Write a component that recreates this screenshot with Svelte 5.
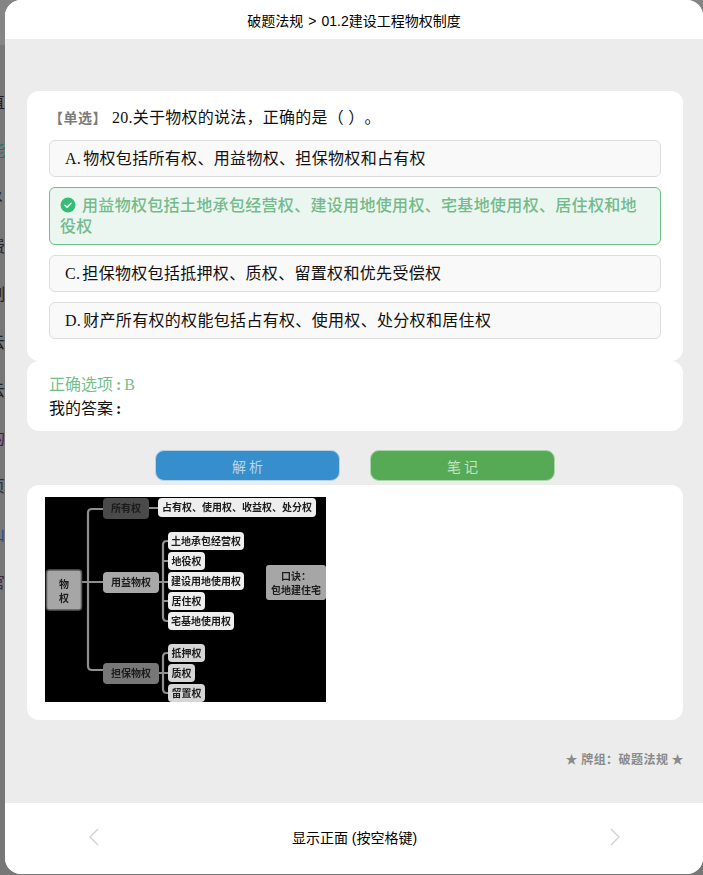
<script>
  const bgRows = [
    { t: '直', c: '#1d1d2b' }, { t: '能', c: '#0d7a74' }, { t: '㐅', c: '#222' }, { t: '费', c: '#1c2733' },
    { t: '制', c: '#222' }, { t: '云', c: '#222' }, { t: '云', c: '#222' }, { t: '的', c: '#3c1a5c' },
    { t: '页', c: '#2b3340' }, { t: '山', c: '#1c4f8a' }, { t: '官', c: '#3b2a4c' }
  ];
  const options = [
    { key: 'A.', text: '物权包括所有权、用益物权、担保物权和占有权' },
    { key: 'B.', text: '用益物权包括土地承包经营权、建设用地使用权、宅基地使用权、居住权和地役权', correct: true },
    { key: 'C.', text: '担保物权包括抵押权、质权、留置权和优先受偿权' },
    { key: 'D.', text: '财产所有权的权能包括占有权、使用权、处分权和居住权' }
  ];
  const nodes = [
    { x: 58, y: 1, w: 46, h: 21, t: '所有权', k: 'dark' },
    { x: 113, y: 1, w: 158, h: 19, t: '占有权、使用权、收益权、处分权', k: 'light' },
    { x: 58, y: 75, w: 56, h: 21, t: '用益物权', k: 'mid' },
    { x: 123, y: 35, w: 76, h: 18, t: '土地承包经营权', k: 'light' },
    { x: 123, y: 55, w: 37, h: 18, t: '地役权', k: 'light' },
    { x: 123, y: 75, w: 76, h: 18, t: '建设用地使用权', k: 'light' },
    { x: 123, y: 95, w: 37, h: 18, t: '居住权', k: 'light' },
    { x: 123, y: 115, w: 66, h: 18, t: '宅基地使用权', k: 'light' },
    { x: 58, y: 166, w: 56, h: 21, t: '担保物权', k: 'mid2' },
    { x: 123, y: 147, w: 37, h: 18, t: '抵押权', k: 'pale' },
    { x: 123, y: 167, w: 27, h: 18, t: '质权', k: 'pale' },
    { x: 123, y: 187, w: 37, h: 18, t: '留置权', k: 'pale' }
  ];
</script>

<div class="backdrop">
  <div class="bg-top"></div>
  <div class="bg-rows">
    {#each bgRows as r}<span style:color={r.c}>{r.t}</span>{/each}
  </div>
  <div class="modal">
    <header class="top">破题法规 &gt; 01.2建设工程物权制度</header>
    <main class="body">
      <section class="card question">
        <p class="stem"><span class="tag">【单选】</span>20.关于物权的说法，正确的是（ ）。</p>
        {#each options as o}
          <div class="option" class:correct={o.correct}>
            {#if o.correct}
              <svg class="check" viewBox="0 0 16 16" width="16" height="16">
                <circle cx="8" cy="8" r="7.5" fill="#35bd78" />
                <path d="M5 8.2l2.1 2 3.9-3.900" fill="none" stroke="#fff" stroke-width="1.500" stroke-linecap="round" stroke-linejoin="round" />
              </svg>
              {o.text}
            {:else}
              <span class="key">{o.key}</span>{o.text}
            {/if}
          </div>
        {/each}
      </section>
      <section class="card answer">
        <div class="right">正确选项 <b>:</b> B</div>
        <div>我的答案 <b>:</b></div>
      </section>
      <div class="buttons">
        <button class="blue">解 析</button>
        <button class="green">笔 记</button>
      </div>
      <section class="card picture">
        <svg class="diagram" viewBox="0 0 281 205" width="281" height="205">
          <rect width="281" height="205" fill="#000" />
          <g class="lines" fill="none" stroke="#8f8f8f" stroke-width="2.200">
            <path d="M36 85h7M43 85V16q0-4 4-4h11M43 85h15M43 85v84q0 4 4 4h11" />
            <path d="M104 11h9" />
            <path d="M114 85h9M118 85V48q0-4 4-4h1M118 64h5M118 104h5M118 85v35q0 4 4 4h1" />
            <path d="M114 176h9M118 176V160q0-4 4-4h1M118 176v16q0 4 4 4h1" />
          </g>
          <rect x="1.500" y="73" width="35" height="40" rx="3" fill="#a6a6a6" stroke="#5a5a5a" stroke-width="1.500" />
          <text x="19" y="91" class="t">物</text>
          <text x="19" y="105" class="t">权</text>
          {#each nodes as n}
            <rect x={n.x} y={n.y} width={n.w} height={n.h} rx="4" class={n.k} />
            <text x={n.x + n.w / 2} y={n.y + n.h / 2 + 3.500} class="t">{n.t}</text>
          {/each}
          <rect x="221" y="68" width="60" height="35" rx="3" fill="#a6a6a6" />
          <text x="251" y="83" class="t">口诀：</text>
          <text x="251" y="97" class="t">包地建住宅</text>
        </svg>
      </section>
      <div class="deck">★ 牌组：破题法规 ★</div>
    </main>
    <footer class="bottom">
      <svg width="12" height="18" viewBox="0 0 12 18"><path d="M10 1L2 9l8 8" fill="none" stroke="#d0d0d0" stroke-width="1.300" /></svg>
      <span>显示正面 (按空格键)</span>
      <svg width="12" height="18" viewBox="0 0 12 18"><path d="M2 1l8 8-8 8" fill="none" stroke="#d0d0d0" stroke-width="1.300" /></svg>
    </footer>
  </div>
</div>

<style>
  :global(body) { margin: 0; }
  .backdrop {
    position: relative;
    width: 703px;
    height: 875px;
    overflow: hidden;
    background: #777;
    font-family: "Liberation Serif", "Noto Sans CJK SC", serif;
    color: #111;
  }
  .bg-top { height: 45px; background: #858585; }
  .bg-rows {
    display: flex;
    flex-direction: column;
    gap: 30px;
    padding-top: 47px;
    width: 5px;
    overflow: hidden;
    font: 16px/18px "Noto Sans CJK SC", sans-serif;
  }
  .bg-rows span { display: block; width: 16px; transform: translateX(-11px); }
  .modal {
    position: absolute;
    left: 5px;
    top: 0;
    width: 698px;
    height: 874px;
    display: flex;
    flex-direction: column;
    border-radius: 16px;
    overflow: hidden;
    background: #ececec;
  }
  .top {
    height: 39px;
    flex: none;
    background: #fff;
    display: flex;
    align-items: center;
    justify-content: center;
    font: 14px "Liberation Sans", "Noto Sans CJK SC", sans-serif;
    word-spacing: 1.200px;
    color: #000;
  }
  .body {
    flex: 1;
    padding: 52px 20px 0 22px;
    min-height: 0;
  }
  .card { background: #fff; border-radius: 12px; }
  .question { padding: 16px 22px 22px; height: 270px; box-sizing: border-box; }
  .stem {
    margin: 0 0 12px;
    font-size: 16px;
    letter-spacing: 0.25px;
    line-height: 21px;
    height: 21px;
    white-space: nowrap;
    text-spacing-trim: space-all;
  }
  .tag { color: #7b7b7b; font-size: 14px; letter-spacing: 0.500px; font-weight: 700; margin-right: 5px; font-family: "Noto Sans CJK SC", serif; }
  .option {
    font-size: 16px;
    letter-spacing: 0.32px;
    line-height: 21px;
    padding: 7px 15px;
    border: 1px solid #dcdcdc;
    border-radius: 6px;
    background: #f9f9f9;
    margin-bottom: 10px;
  }
  .key { margin-right: 2px; }
  .option.correct {
    padding: 7px 10px;
    background: #ecf6f0;
    border-color: #6cc187;
    color: #73bb8c;
    font-weight: 500;
  }
  .check { vertical-align: -2px; margin-right: 6px; }
  .answer {
    height: 70px;
    box-sizing: border-box;
    padding: 12px 22px;
    font-size: 16px;
    line-height: 24px;
    word-spacing: -1px;
  }
  .right { color: #73bf8b; }
  .buttons {
    display: flex;
    justify-content: center;
    gap: 30px;
    padding: 19px 0 4px;
  }
  button {
    width: 185px;
    height: 31px;
    border-radius: 9px;
    border: 1px solid #b5d3e8;
    font: 14px "Noto Sans CJK SC", sans-serif;
    padding: 0;
  }
  .blue { background: #368fcc; color: #b8d6ec; }
  .green { background: #56a955; color: #c4e2c4; border-color: #a9d5a9; }
  .picture { height: 235px; padding: 12px 18px; box-sizing: border-box; }
  .diagram { display: block; filter: blur(0.55px); }
  .lines { stroke-linecap: round; }
  .t {
    font: 700 10px "Noto Sans CJK SC", sans-serif;
    fill: #1c1c1c;
    text-anchor: middle;
  }
  .dark { fill: #4a4a4a; }
  .mid { fill: #a8a8a8; }
  .mid2 { fill: #777; }
  .light { fill: #eee; }
  .pale { fill: #d6d6d6; }
  .deck {
    margin-top: 30px;
    margin-right: -1px;
    text-align: right;
    font: 700 12px "Noto Sans CJK SC", sans-serif;
    letter-spacing: 0.45px;
    color: #8a8a8a;
  }
  .bottom {
    height: 71px;
    flex: none;
    box-sizing: border-box;
    padding: 0 82px 3px 83px;
    background: #fff;
    display: flex;
    align-items: center;
    justify-content: space-between;
    font: 14px "Liberation Sans", "Noto Sans CJK SC", sans-serif;
    color: #000;
  }
</style>
